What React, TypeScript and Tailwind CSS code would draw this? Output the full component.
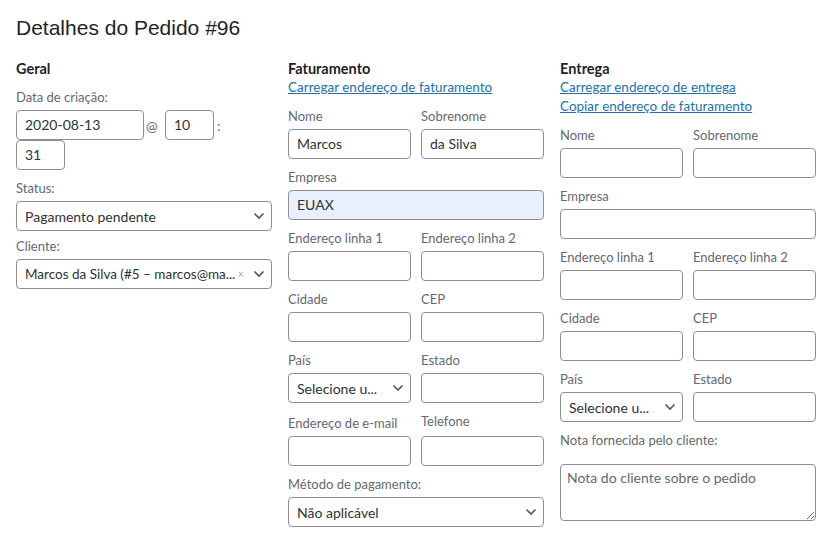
import type { ReactNode } from 'react';

function Chevron() {
  return (
    <svg width="12" height="8" viewBox="0 0 12 8" className="shrink-0">
      <path d="M1.5 1.5 6 6l4.5-4.5" fill="none" stroke="#50575e" strokeWidth="1.6" />
    </svg>
  );
}

function Label({ children, className }: { children: ReactNode; className?: string }) {
  return (
    <div className={`text-[13px] leading-[18px] text-[#646970] mb-[4px] whitespace-nowrap ${className ?? ''}`}>
      {children}
    </div>
  );
}

function Input({ value, filled, className }: { value?: string; filled?: boolean; className?: string }) {
  return (
    <div
      className={`h-[30px] rounded-[4px] border border-[#8c8f94] px-[8px] text-[14px] leading-[28px] text-[#2c3338] ${
        filled ? 'bg-[#e8f0fe]' : 'bg-white'
      } ${className ?? ''}`}
    >
      {value}
    </div>
  );
}

// the shown value is already shortened, as the browser shows it
function Select({ value, clear }: { value: string; clear?: boolean }) {
  return (
    <div className="h-[30px] rounded-[4px] border border-[#8c8f94] bg-white pl-[8px] pr-[6px] flex items-center text-[14px] text-[#2c3338]">
      <span className={`flex-1 whitespace-nowrap ${clear ? 'text-[13.5px]' : ''}`}>{value}</span>
      {clear && <span className="text-[11px] text-[#a7aaad] mr-[9px]">×</span>}
      <Chevron />
    </div>
  );
}

function Field({ label, children, className, labelClass }: { label: string; children: ReactNode; className?: string; labelClass?: string }) {
  return (
    <div className={`mb-[9px] ${className ?? ''}`}>
      <Label className={labelClass}>{label}</Label>
      {children}
    </div>
  );
}

function Pair({ children }: { children: ReactNode }) {
  return <div className="grid grid-cols-[123px_123px] gap-x-[10px]">{children}</div>;
}

function Heading({ children }: { children: ReactNode }) {
  return <div className="text-[14.5px] font-bold leading-[18px] text-[#1d2327]">{children}</div>;
}

function Link({ children }: { children: ReactNode }) {
  return <div className="text-[13.5px] leading-[19px] text-[#2271b1] underline whitespace-nowrap">{children}</div>;
}

function AddressFields({ prefix }: { prefix: 'billing' | 'shipping' }) {
  const billing = prefix === 'billing';
  return (
    <>
      <Pair>
        <Field label="Nome"><Input value={billing ? 'Marcos' : ''} /></Field>
        <Field label="Sobrenome"><Input value={billing ? 'da Silva' : ''} /></Field>
      </Pair>
      <Field label="Empresa"><Input value={billing ? 'EUAX' : ''} filled={billing} /></Field>
      <Pair>
        <Field label="Endereço linha 1"><Input /></Field>
        <Field label="Endereço linha 2"><Input /></Field>
        <Field label="Cidade"><Input /></Field>
        <Field label="CEP"><Input /></Field>
        <Field label="País"><Select value="Selecione u..." /></Field>
        <Field label="Estado"><Input /></Field>
      </Pair>
    </>
  );
}

export default function App() {
  return (
    <div className="w-[829px] h-[538px] bg-white px-[16px] pt-[14px] overflow-hidden font-['Lato','Noto_Sans',sans-serif]">
      <h1 className="text-[21px] leading-[28px] text-[#1d2327] font-['Liberation_Sans',Arial,sans-serif]">
        Detalhes do Pedido #96
      </h1>
      <div className="mt-[18px] grid grid-cols-[256px_256px_256px] gap-x-[16px]">
        {/* Geral */}
        <div>
          <Heading>Geral</Heading>
          <Label className="mt-[10px]">Data de criação:</Label>
          <div className="flex items-center">
            <Input value="2020-08-13" className="w-[128px]" />
            <span className="w-[21px] pl-[2px] text-[14px] text-[#646970]">@</span>
            <Input value="10" className="w-[49px]" />
            <span className="pl-[3px] text-[14px] text-[#646970]">:</span>
          </div>
          <Input value="31" className="w-[49px]" />
          <Label className="mt-[9px]">Status:</Label>
          <Select value="Pagamento pendente" />
          <Label className="mt-[6px]">Cliente:</Label>
          <Select value="Marcos da Silva (#5 – marcos@ma..." clear />
        </div>

        {/* Faturamento */}
        <div>
          <Heading>Faturamento</Heading>
          <Link>Carregar endereço de faturamento</Link>
          <div className="mt-[10px]">
            <AddressFields prefix="billing" />
            <Pair>
              <Field label="Endereço de e-mail" labelClass="pt-[2px]"><Input /></Field>
              <Field label="Telefone" labelClass="pb-[2px]"><Input /></Field>
            </Pair>
            <Field label="Método de pagamento:"><Select value="Não aplicável" /></Field>
          </div>
        </div>

        {/* Entrega */}
        <div>
          <Heading>Entrega</Heading>
          <Link>Carregar endereço de entrega</Link>
          <Link>Copiar endereço de faturamento</Link>
          <div className="mt-[10px]">
            <AddressFields prefix="shipping" />
            <Label className="mb-[15px]">Nota fornecida pelo cliente:</Label>
            <textarea
              readOnly
              placeholder="Nota do cliente sobre o pedido"
              className="block w-[256px] h-[57px] rounded-[4px] border border-[#8c8f94] bg-white px-[6px] py-[3px] text-[14px] leading-[20px] text-[#2c3338] placeholder:text-[#646970] resize"
            />
          </div>
        </div>
      </div>
    </div>
  );
}
